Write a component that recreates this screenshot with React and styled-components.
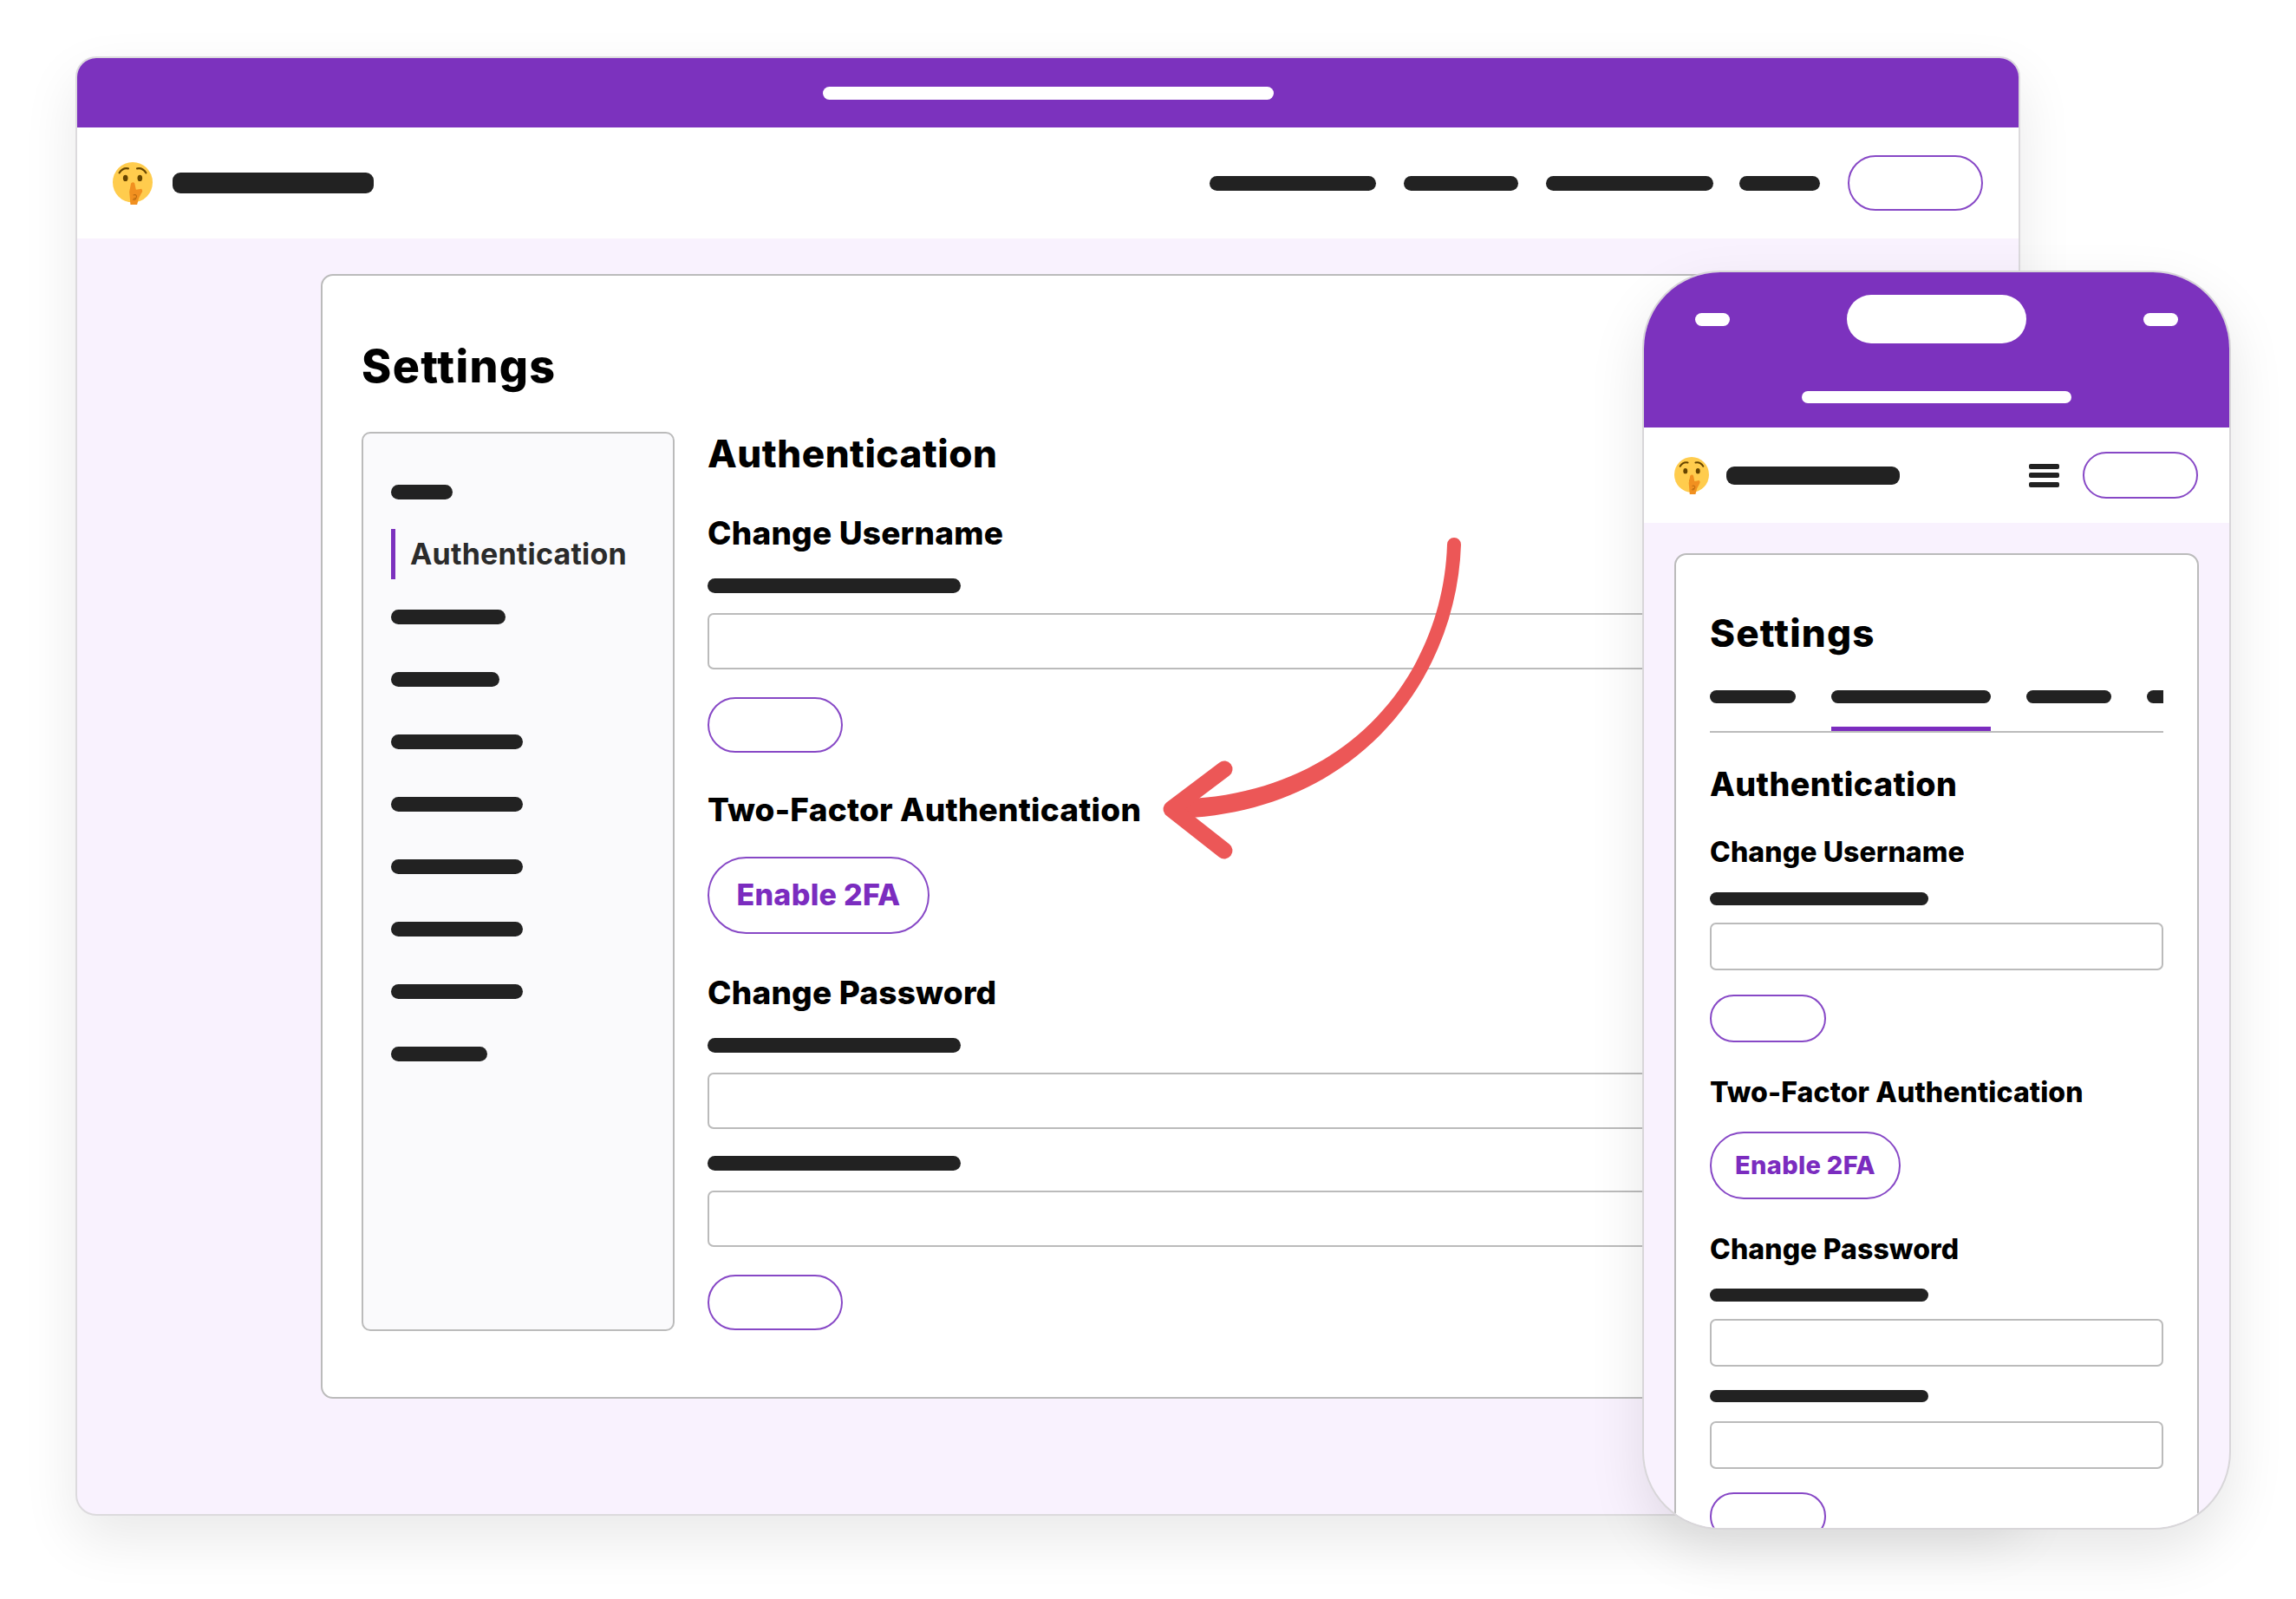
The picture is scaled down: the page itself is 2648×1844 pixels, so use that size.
import React from "react";
import styled, { createGlobalStyle } from "styled-components";

const PURPLE = "#7C32BE";
const LILAC = "#F9F2FE";
const GREY = "#BBBBBB";
const INK = "#222222";

const Global = createGlobalStyle`
  * { box-sizing: border-box; }
  html, body { margin: 0; padding: 0; background: #fff; }
  body { font-family: Inter, "Noto Sans", sans-serif; color: #000; }
`;

const Stage = styled.div`
  position: relative;
  width: 2648px;
  height: 1844px;
  padding: 65px 0 0 87px;
  overflow: hidden;
  background: #fff;
`;

const Frame = styled.div`
  width: 2243px;
  height: 1683px;
  display: flex;
  flex-direction: column;
  border: 2px solid #dcdadd;
  border-radius: 24px;
  overflow: hidden;
  background: ${LILAC};
  box-shadow: 0 26px 64px rgba(0, 0, 0, 0.09);
`;

const BrowserBar = styled.div`
  height: 80px;
  flex: none;
  display: flex;
  align-items: center;
  justify-content: center;
  background: ${PURPLE};
`;

const WhitePill = styled.div`
  width: ${(p) => p.$w}px;
  height: ${(p) => p.$h}px;
  margin-top: ${(p) => p.$mt || 0}px;
  border-radius: ${(p) => p.$r || 8}px;
  background: #fff;
  flex: none;
`;

const TopNav = styled.div`
  height: 128px;
  flex: none;
  display: flex;
  align-items: center;
  padding: 0 41px;
  background: #fff;
`;

const Bar = styled.div`
  width: ${(p) => p.$w}px;
  height: ${(p) => p.$h || 17}px;
  margin-top: ${(p) => p.$mt || 0}px;
  margin-left: ${(p) => p.$ml || 0}px;
  border-radius: 9px;
  background: ${INK};
  flex: none;
`;

const Spacer = styled.div`
  flex: 1;
`;

const Outline = styled.div`
  width: ${(p) => p.$w}px;
  height: ${(p) => p.$h}px;
  margin-top: ${(p) => p.$mt || 0}px;
  margin-left: ${(p) => p.$ml || 0}px;
  flex: none;
  display: flex;
  align-items: center;
  justify-content: center;
  padding-bottom: 2px;
  border: ${(p) => p.$bw || 2.5}px solid #8748c6;
  border-radius: ${(p) => p.$h / 2}px;
  background: #fff;
  color: #7B2CBF;
  font-size: ${(p) => p.$fs || 34}px;
  font-weight: 800;
  letter-spacing: 0.3px;
`;

const Content = styled.div`
  flex: 1;
  padding: 41px 0 0 281px;
`;

const Card = styled.div`
  width: 1800px;
  height: 1297px;
  padding: 73px 0 0 45px;
  border: 2px solid ${GREY};
  border-radius: 14px;
  background: #fff;
`;

const PageTitle = styled.h1`
  margin: 0 0 43px;
  font-size: 52px;
  line-height: 64px;
  font-weight: 800;
  letter-spacing: 1.3px;
  color: #000;
`;

const Columns = styled.div`
  display: flex;
  gap: 38px;
`;

const SideNav = styled.div`
  width: 361px;
  height: 1037px;
  flex: none;
  display: flex;
  flex-direction: column;
  gap: 14px;
  padding: 38px 0 0 32px;
  border: 2px solid ${GREY};
  border-radius: 10px;
  background: #FAFAFC;
`;

const SideItem = styled.div`
  height: 58px;
  flex: none;
  display: flex;
  align-items: center;
`;

const SideActive = styled(SideItem)`
  padding: 0 0 2px 17px;
  border-left: 5px solid ${PURPLE};
  font-size: 34px;
  font-weight: 700;
  letter-spacing: 0.2px;
  color: #2b2b2b;
`;

const Main = styled.div`
  flex: 1;
  min-width: 0;
`;

const SectionTitle = styled.h2`
  margin: ${(p) => p.$mt || 0}px 0 0;
  font-size: ${(p) => p.$fs}px;
  line-height: ${(p) => p.$lh}px;
  font-weight: 800;
  letter-spacing: ${(p) => p.$ls}px;
  color: #000;
`;

const SubTitle = styled.h3`
  margin: ${(p) => p.$mt || 0}px 0 0;
  font-size: ${(p) => p.$fs}px;
  line-height: ${(p) => p.$lh}px;
  font-weight: 800;
  letter-spacing: ${(p) => p.$ls}px;
  color: #000;
`;

const Input = styled.div`
  width: ${(p) => (p.$w ? `${p.$w}px` : "100%")};
  height: ${(p) => p.$h}px;
  margin-top: ${(p) => p.$mt || 0}px;
  border: 2px solid ${GREY};
  border-radius: 7px;
  background: #fff;
`;

const Phone = styled.div`
  position: absolute;
  left: 1894px;
  top: 312px;
  width: 679px;
  height: 1452px;
  display: flex;
  flex-direction: column;
  border: 2px solid #d8d6d9;
  border-radius: 90px;
  overflow: hidden;
  background: ${LILAC};
  box-shadow: 0 26px 64px rgba(0, 0, 0, 0.1);
`;

const PhoneTop = styled.div`
  height: 179px;
  flex: none;
  display: flex;
  flex-direction: column;
  align-items: center;
  padding-top: 26px;
  background: ${PURPLE};
`;

const StatusRow = styled.div`
  width: 100%;
  display: flex;
  align-items: center;
  justify-content: space-between;
  padding: 0 59px;
`;

const PhoneNav = styled.div`
  height: 110px;
  flex: none;
  display: flex;
  align-items: center;
  padding: 0 36px 0 35px;
  background: #fff;
`;

const Burger = styled.div`
  display: flex;
  flex-direction: column;
  gap: 4.5px;
  width: 35px;
  margin-right: 27px;
  flex: none;
`;

const BurgerLine = styled.div`
  height: 6px;
  border-radius: 2px;
  background: ${INK};
`;

const PhoneBody = styled.div`
  flex: 1;
  padding: 35px 35px 0;
  min-height: 0;
`;

const PhoneCard = styled.div`
  height: 1300px;
  padding: 62px 0 0 39px;
  border: 2px solid ${GREY};
  border-radius: 14px;
  background: #fff;
`;

const PhoneTitle = styled.h1`
  margin: 0 0 38px;
  font-size: 44px;
  line-height: 56px;
  font-weight: 800;
  letter-spacing: 1.2px;
  color: #000;
`;

const Tabs = styled.div`
  width: 523px;
  display: flex;
  gap: 41px;
  overflow: hidden;
  border-bottom: 2px solid ${GREY};
`;

const Tab = styled.div`
  flex: none;
  height: 47px;
  border-bottom: 5px solid ${(p) => (p.$active ? "#7B2CBF" : "transparent")};
`;

const Overlay = styled.svg`
  position: absolute;
  left: 0;
  top: 0;
  width: 2648px;
  height: 1844px;
  pointer-events: none;
`;

const Face = ({ w, h }) => (
  <svg width={w} height={h} viewBox="0 0 36 40" style={{ flex: "none" }} preserveAspectRatio="none">
    <ellipse cx="18" cy="19" rx="18" ry="19" fill="#FFCC4D" />
    <path d="M6 10 Q9 5 14 6" fill="none" stroke="#664500" strokeWidth="1.8" strokeLinecap="round" />
    <path d="M30 10 Q27 5 22 6" fill="none" stroke="#664500" strokeWidth="1.8" strokeLinecap="round" />
    <ellipse cx="11.5" cy="15" rx="2.2" ry="3" fill="#664500" />
    <ellipse cx="24.5" cy="15" rx="2.2" ry="3" fill="#664500" />
    <ellipse cx="18" cy="26" rx="2.4" ry="2.2" fill="#664500" />
    <path d="M16 40 L15 28 L16.5 20 Q18.5 18 19.8 20 L21 26 L26 25 Q27.5 27 26 29 L23.5 34 L22 40 Z" fill="#F19020" />
    <path d="M18.5 31 q3 -1 3 1.5 q0 2 -2.5 1.5 M18 35 q2 1 3 -.5" fill="none" stroke="#B96A10" strokeWidth="0.9" />
  </svg>
);

const Arrow = () => (
  <Overlay viewBox="0 0 2648 1844">
    <path
      d="M1669 628 C1664 778 1554 920 1352 922 L1352 944 C1566 940 1680 782 1685 628 A8 8 0 0 0 1669 628 Z"
      fill="#EC5757"
    />
    <path d="M1412 887 L1351 933 L1412 981" fill="none" stroke="#EC5757" strokeWidth="19" strokeLinecap="round" strokeLinejoin="round" />
  </Overlay>
);

const sideWidths = [132, 125, 152, 152, 152, 152, 152, 111];

export default function App() {
  return (
    <Stage>
      <Global />
      <Frame>
        <BrowserBar>
          <WhitePill $w={520} $h={15} />
        </BrowserBar>
        <TopNav>
          <Face w={46} h={49} />
          <Bar $w={232} $h={24} $ml={23} />
          <Spacer />
          <Bar $w={192} />
          <Bar $w={132} $ml={32} />
          <Bar $w={193} $ml={32} />
          <Bar $w={93} $ml={30} />
          <Outline $w={156} $h={64} $ml={32} />
        </TopNav>
        <Content>
          <Card>
            <PageTitle>Settings</PageTitle>
            <Columns>
              <SideNav>
                <SideItem>
                  <Bar $w={71} />
                </SideItem>
                <SideActive>Authentication</SideActive>
                {sideWidths.map((w, i) => (
                  <SideItem key={i}>
                    <Bar $w={w} />
                  </SideItem>
                ))}
              </SideNav>
              <Main>
                <SectionTitle $fs={44} $lh={50} $ls={0.5}>Authentication</SectionTitle>
                <SubTitle $fs={37} $lh={44} $mt={45} $ls={0.2}>Change Username</SubTitle>
                <Bar $w={292} $mt={30} />
                <Input $h={65} $mt={23} />
                <Outline $w={156} $h={64} $mt={32} />
                <SubTitle $fs={37} $lh={44} $mt={44} $ls={0.2}>Two-Factor Authentication</SubTitle>
                <Outline $w={256} $h={89} $mt={32}>Enable 2FA</Outline>
                <SubTitle $fs={37} $lh={44} $mt={46} $ls={0.2}>Change Password</SubTitle>
                <Bar $w={292} $mt={30} />
                <Input $h={65} $mt={23} />
                <Bar $w={292} $mt={31} />
                <Input $h={65} $mt={23} />
                <Outline $w={156} $h={64} $mt={32} />
              </Main>
            </Columns>
          </Card>
        </Content>
      </Frame>
      <Arrow />
      <Phone>
        <PhoneTop>
          <StatusRow>
            <WhitePill $w={40} $h={15} />
            <WhitePill $w={207} $h={56} $r={28} />
            <WhitePill $w={40} $h={15} />
          </StatusRow>
          <WhitePill $w={311} $h={14} $r={7} $mt={55} />
        </PhoneTop>
        <PhoneNav>
          <Face w={40} h={43} />
          <Bar $w={200} $h={21} $ml={20} />
          <Spacer />
          <Burger>
            <BurgerLine />
            <BurgerLine />
            <BurgerLine />
          </Burger>
          <Outline $w={133} $h={54} $bw={2} />
        </PhoneNav>
        <PhoneBody>
          <PhoneCard>
            <PhoneTitle>Settings</PhoneTitle>
            <Tabs>
              <Tab><Bar $w={99} $h={15} /></Tab>
              <Tab $active><Bar $w={184} $h={15} /></Tab>
              <Tab><Bar $w={98} $h={15} /></Tab>
              <Tab><Bar $w={60} $h={15} /></Tab>
            </Tabs>
            <SectionTitle $fs={37.6} $lh={44} $mt={38} $ls={0.4}>Authentication</SectionTitle>
            <SubTitle $fs={32} $lh={36} $mt={38} $ls={0.1}>Change Username</SubTitle>
            <Bar $w={252} $h={15} $mt={28} />
            <Input $w={523} $h={55} $mt={20} />
            <Outline $w={134} $h={55} $mt={28} $bw={2} />
            <SubTitle $fs={32} $lh={36} $mt={40} $ls={0.1}>Two-Factor Authentication</SubTitle>
            <Outline $w={220} $h={78} $mt={27} $bw={2} $fs={29}>Enable 2FA</Outline>
            <SubTitle $fs={32} $lh={36} $mt={40} $ls={0.1}>Change Password</SubTitle>
            <Bar $w={252} $h={15} $mt={27} />
            <Input $w={523} $h={55} $mt={20} />
            <Bar $w={252} $h={14} $mt={27} />
            <Input $w={523} $h={55} $mt={22} />
            <Outline $w={134} $h={55} $mt={27} $bw={2} />
          </PhoneCard>
        </PhoneBody>
      </Phone>
    </Stage>
  );
}
